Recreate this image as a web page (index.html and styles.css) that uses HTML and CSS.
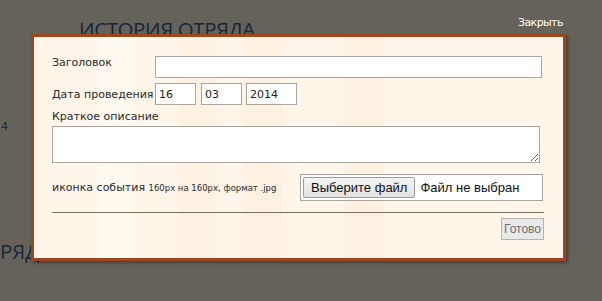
FILE: index.html
```html
<!DOCTYPE html>
<html lang="ru">
<head>
    <meta charset="UTF-8">
    <title>История отряда</title>
    <link rel="stylesheet" href="styles.css">
</head>
<body>
    <div class="page">
        <h1 class="page-title">ИСТОРИЯ ОТРЯДА</h1>
        <p class="page-num">4</p>
        <h2 class="page-sub">РЯДА</h2>
    </div>

    <a class="close" href="#">Закрыть</a>

    <div class="modal">
        <div class="row">
            <label class="lbl lbl-wide">Заголовок</label>
            <input class="field title" type="text">
        </div>
        <div class="row">
            <label class="lbl">Дата проведения</label>
            <input class="field day" type="text" value="16">
            <input class="field month" type="text" value="03">
            <input class="field year" type="text" value="2014">
        </div>
        <div class="col">
            <label class="lbl">Краткое описание</label>
            <textarea class="field descr"></textarea>
        </div>
        <div class="row file-row">
            <label class="lbl">иконка события <small>160px на 160px, формат .jpg</small></label>
            <div class="file">
                <span class="file-btn">Выберите файл</span>
                <span class="file-name">Файл не выбран</span>
            </div>
        </div>
        <hr class="sep">
        <div class="actions">
            <button class="done">Готово</button>
        </div>
    </div>
</body>
</html>
```

FILE: styles.css
```css
body {
    margin: 0;
    padding: 0;
    width: 602px;
    height: 301px;
    overflow: hidden;
    background: #65625a;
    font-family: 'DejaVu Sans', Verdana, sans-serif;
    position: relative;
}

.page {
    height: 301px;
    color: #16273a;
}

.page-title {
    margin: 0;
    padding: 15px 0 0 79px;
    font-family: 'Open Sans', 'DejaVu Sans', sans-serif;
    font-weight: normal;
    font-size: 20.5px;
    letter-spacing: -0.4px;
}

.page-num {
    margin: 0;
    padding: 77px 0 0 1px;
    font-size: 11px;
}

.page-sub {
    margin: 0;
    padding: 104px 0 0 0;
    font-family: 'Open Sans', 'DejaVu Sans', sans-serif;
    font-weight: normal;
    font-size: 20.5px;
}

.close {
    position: absolute;
    top: 16px;
    left: 518px;
    color: #fff;
    font-size: 11px;
    text-decoration: none;
    letter-spacing: -0.6px;
}

.modal {
    position: absolute;
    top: 34px;
    left: 31px;
    width: 492px;
    height: 186px;
    padding: 19px 19px 16px 18px;
    border: 3px solid #a2441d;
    background-color: #fff6e9;
    background-image: linear-gradient(90deg,
        transparent 0, transparent 64px,
        #fff9f0 64px, #fff9f0 100px,
        transparent 100px, transparent 145px,
        #fdf1e2 145px, #fdf1e2 182px,
        transparent 182px, transparent 210px,
        #fcf0e0 210px, #fcf0e0 248px,
        transparent 248px, transparent 310px,
        #fcf0e0 310px, #fcf0e0 350px,
        transparent 350px);
    box-shadow: 2px 2px 3px rgba(0, 0, 0, 0.35);
}

.row {
    display: flex;
    align-items: center;
    margin-bottom: 5px;
}

.col {
    display: flex;
    flex-direction: column;
    margin-top: 2px;
}

.lbl {
    font-size: 11px;
    color: #2a2a2a;
    width: 103px;
    white-space: nowrap;
}

.lbl-wide {
    align-self: flex-start;
}

.field {
    box-sizing: border-box;
    border: 1px solid #a9a6a2;
    background: #fff;
    font-family: 'DejaVu Sans', Verdana, sans-serif;
    font-size: 11px;
    color: #222;
    padding: 2px 3px;
    height: 22px;
    outline: none;
}

.title {
    width: 387px;
}

.day { width: 41px; }
.month { width: 41px; margin-left: 5px; }
.year { width: 51px; margin-left: 4px; }

.descr {
    width: 488px;
    height: 37px;
    margin-top: 3px;
    resize: vertical;
}

.file-row {
    margin-top: 11px;
    justify-content: space-between;
    width: 491px;
}

.file-row .lbl {
    width: auto;
}

.lbl small {
    font-size: 8.5px;
}

.file {
    box-sizing: border-box;
    width: 243px;
    height: 27px;
    border: 1px solid #a9a6a2;
    background: #fff;
    display: flex;
    align-items: center;
    padding-left: 2px;
    font-family: 'Liberation Sans', Arial, sans-serif;
    font-size: 13px;
    color: #111;
}

.file-btn {
    box-sizing: border-box;
    height: 21px;
    padding: 0 7px;
    display: flex;
    align-items: center;
    background: linear-gradient(#f4f4f4, #e2e2e2);
    border: 1px solid #9c9c9c;
    border-radius: 2px;
}

.file-name {
    margin-left: 5px;
}

.sep {
    margin: 11px 0 0 0;
    width: 492px;
    border: 0;
    border-top: 1px solid #7d6e60;
}

.actions {
    display: flex;
    justify-content: flex-end;
    width: 492px;
    margin-top: 5px;
}

.done {
    font-family: 'Liberation Sans', Arial, sans-serif;
    font-size: 12px;
    color: #6e6e6e;
    background: #e9e9e9;
    border: 1px solid #b6b6b6;
    height: 22px;
    padding: 0 2px;
}
```
